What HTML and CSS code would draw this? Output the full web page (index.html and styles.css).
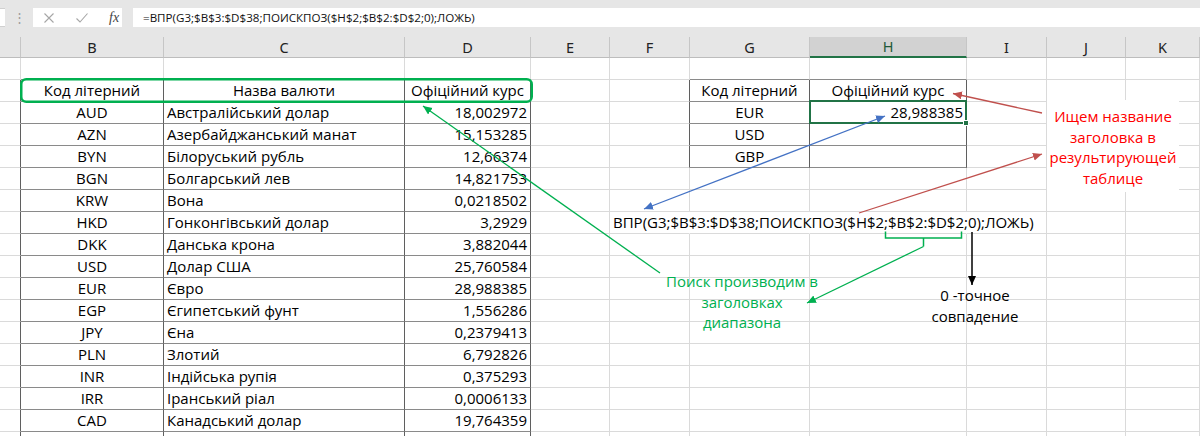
FILE: index.html
```html
<!DOCTYPE html>
<html lang="uk">
<head>
<meta charset="utf-8">
<title>ВПР + ПОИСКПОЗ</title>
<link rel="stylesheet" href="styles.css">
</head>
<body>
<div class="app">
  <div class="fbar">
    <div class="namebox"></div>
    <div class="grip">⋮</div>
    <div class="fxbox">
      <svg class="ic" width="10" height="10" viewBox="0 0 10 10"><path d="M0.5 0.5 L9.5 9.5 M9.5 0.5 L0.5 9.5" stroke="#a6a6a6" stroke-width="1.1" fill="none"/></svg>
      <svg class="ic" width="12" height="10" viewBox="0 0 12 10"><path d="M0.5 5.5 L4 9 L11.5 0.5" stroke="#a6a6a6" stroke-width="1.1" fill="none"/></svg>
      <span class="fx">fx</span>
    </div>
    <div class="finput">=ВПР(G3;$B$3:$D$38;ПОИСКПОЗ($H$2;$B$2:$D$2;0);ЛОЖЬ)</div>
  </div>

  <div class="row hdr">
    <div></div><div>B</div><div>C</div><div>D</div><div>E</div><div>F</div><div>G</div><div class="on">H</div><div>I</div><div>J</div><div>K</div>
  </div>

  <div class="sheet">
    <div class="row"><div></div><div class="tt"></div><div class="tt"></div><div class="tt"></div><div></div><div></div><div class="tt"></div><div class="tt"></div><div></div><div></div><div></div></div>
    <div class="row"><div class="tl"></div><div class="t ctr">Код літерний</div><div class="t ctr">Назва валюти</div><div class="t ctr">Офіційний курс</div><div></div><div class="tl"></div><div class="t ctr">Код літерний</div><div class="t ctr">Офіційний курс</div><div></div><div></div><div></div></div>
    <div class="row"><div class="tl"></div><div class="t ctr">AUD</div><div class="t">Австралійський долар</div><div class="t rt">18,002972</div><div></div><div class="tl"></div><div class="t ctr">EUR</div><div class="t rt sel">28,988385</div><div></div><div></div><div></div></div>
    <div class="row"><div class="tl"></div><div class="t ctr">AZN</div><div class="t">Азербайджанський манат</div><div class="t rt">15,153285</div><div></div><div class="tl"></div><div class="t ctr">USD</div><div class="t"></div><div></div><div></div><div></div></div>
    <div class="row"><div class="tl"></div><div class="t ctr">BYN</div><div class="t">Білоруський рубль</div><div class="t rt">12,66374</div><div></div><div class="tl"></div><div class="t ctr">GBP</div><div class="t"></div><div></div><div></div><div></div></div>
    <div class="row"><div class="tl"></div><div class="t ctr">BGN</div><div class="t">Болгарський лев</div><div class="t rt">14,821753</div><div></div><div></div><div></div><div></div><div></div><div></div><div></div></div>
    <div class="row"><div class="tl"></div><div class="t ctr">KRW</div><div class="t">Вона</div><div class="t rt">0,0218502</div><div></div><div></div><div></div><div></div><div></div><div></div><div></div></div>
    <div class="row"><div class="tl"></div><div class="t ctr">HKD</div><div class="t">Гонконгівський долар</div><div class="t rt">3,2929</div><div></div><div class="ov">ВПР(G3;$B$3:$D$38;ПОИСКПОЗ($H$2;$B$2:$D$2;0);ЛОЖЬ)</div><div class="nr"></div><div class="nr"></div><div></div><div></div><div></div></div>
    <div class="row"><div class="tl"></div><div class="t ctr">DKK</div><div class="t">Данська крона</div><div class="t rt">3,882044</div><div></div><div></div><div></div><div></div><div></div><div></div><div></div></div>
    <div class="row"><div class="tl"></div><div class="t ctr">USD</div><div class="t">Долар США</div><div class="t rt">25,760584</div><div></div><div></div><div></div><div></div><div></div><div></div><div></div></div>
    <div class="row"><div class="tl"></div><div class="t ctr">EUR</div><div class="t">Євро</div><div class="t rt">28,988385</div><div></div><div></div><div></div><div></div><div></div><div></div><div></div></div>
    <div class="row"><div class="tl"></div><div class="t ctr">EGP</div><div class="t">Єгипетський фунт</div><div class="t rt">1,556286</div><div></div><div></div><div></div><div></div><div></div><div></div><div></div></div>
    <div class="row"><div class="tl"></div><div class="t ctr">JPY</div><div class="t">Єна</div><div class="t rt">0,2379413</div><div></div><div></div><div></div><div></div><div></div><div></div><div></div></div>
    <div class="row"><div class="tl"></div><div class="t ctr">PLN</div><div class="t">Злотий</div><div class="t rt">6,792826</div><div></div><div></div><div></div><div></div><div></div><div></div><div></div></div>
    <div class="row"><div class="tl"></div><div class="t ctr">INR</div><div class="t">Індійська рупія</div><div class="t rt">0,375293</div><div></div><div></div><div></div><div></div><div></div><div></div><div></div></div>
    <div class="row"><div class="tl"></div><div class="t ctr">IRR</div><div class="t">Іранський ріал</div><div class="t rt">0,0006133</div><div></div><div></div><div></div><div></div><div></div><div></div><div></div></div>
    <div class="row"><div class="tl"></div><div class="t ctr">CAD</div><div class="t">Канадський долар</div><div class="t rt">19,764359</div><div></div><div></div><div></div><div></div><div></div><div></div><div></div></div>
    <div class="row"><div class="tl"></div><div class="t"></div><div class="t"></div><div class="t"></div><div></div><div></div><div></div><div></div><div></div><div></div><div></div></div>
  </div>

  <div class="note n-red">Ищем название<br>заголовка в<br>результирующей<br>таблице</div>
  <div class="note n-green">Поиск производим в<br>заголовках<br>диапазона</div>
  <div class="note n-black">0 -точное<br>совпадение</div>

  <svg class="ann" width="1200" height="436" viewBox="0 0 1200 436">
    <defs>
      <marker id="hg" markerUnits="userSpaceOnUse" markerWidth="10" markerHeight="10" refX="9" refY="4" orient="auto"><path d="M0 0 L9 4 L0 8 Z" fill="#00b050"/></marker>
      <marker id="hb" markerUnits="userSpaceOnUse" markerWidth="10" markerHeight="10" refX="9" refY="4" orient="auto-start-reverse"><path d="M0 0 L9 4 L0 8 Z" fill="#4472c4"/></marker>
      <marker id="hr" markerUnits="userSpaceOnUse" markerWidth="10" markerHeight="10" refX="9" refY="4" orient="auto"><path d="M0 0 L9 4 L0 8 Z" fill="#c0504d"/></marker>
      <marker id="hk" markerUnits="userSpaceOnUse" markerWidth="10" markerHeight="10" refX="9" refY="4" orient="auto"><path d="M0 0 L9 4 L0 8 Z" fill="#000"/></marker>
    </defs>
    <rect x="21.25" y="79.25" width="510.5" height="22.5" rx="5" fill="none" stroke="#00b050" stroke-width="2.5"/>
    <line x1="660" y1="273" x2="423" y2="106" stroke="#00b050" stroke-width="1.3" marker-end="url(#hg)"/>
    <line x1="644" y1="209" x2="885" y2="116" stroke="#4472c4" stroke-width="1.3" marker-start="url(#hb)" marker-end="url(#hb)"/>
    <line x1="1042" y1="113" x2="953" y2="93.5" stroke="#c0504d" stroke-width="1.3" marker-end="url(#hr)"/>
    <line x1="859" y1="213" x2="1042" y2="154" stroke="#c0504d" stroke-width="1.3" marker-end="url(#hr)"/>
    <path d="M885.5 231.5 V238 H961.5 V231.5 M923.5 238 V246.5" fill="none" stroke="#00b050" stroke-width="1.5"/>
    <line x1="923.5" y1="246.5" x2="807" y2="303" stroke="#00b050" stroke-width="1.3" marker-end="url(#hg)"/>
    <line x1="972" y1="232" x2="972" y2="285" stroke="#000" stroke-width="1.5" marker-end="url(#hk)"/>
  </svg>
</div>
</body>
</html>
```

FILE: styles.css
```css
html, body {
  margin: 0;
  padding: 0;
  background: #ffffff;
}
.app {
  position: relative;
  width: 1200px;
  height: 436px;
  overflow: hidden;
  font-family: "Open Sans", "Noto Sans", sans-serif;
}
.fbar {
  display: flex;
  align-items: flex-start;
  height: 37px;
  box-sizing: border-box;
  padding-top: 8px;
  background: #e6e6e6;
}
.namebox {
  width: 5px;
  height: 19px;
  background: #fff;
  border-top: 1px solid #d0d0d0;
  border-bottom: 1px solid #d0d0d0;
  box-sizing: border-box;
}
.grip {
  width: 28px;
  height: 19px;
  line-height: 19px;
  text-align: center;
  color: #9c9c9c;
  font-size: 13px;
}
.fxbox {
  width: 89px;
  height: 19px;
  background: #fff;
  display: flex;
  align-items: center;
  box-sizing: border-box;
  padding-left: 11px;
}
.fxbox .ic { display: block; }
.fxbox .ic + .ic { margin-left: 22px; }
.fx {
  margin-left: 21px;
  font: italic 14px/19px "Liberation Serif", serif;
  color: #444;
}
.finput {
  flex: 1;
  margin-left: 11px;
  height: 19px;
  background: #fff;
  padding-left: 10px;
  font: 11.6px/19px "Open Sans", sans-serif;
  color: #111;
  white-space: nowrap;
}

.row {
  display: grid;
  grid-template-columns: 21px 143px 241px 126px 79px 80px 120px 157px 80px 79px 1fr;
  height: 22px;
}
.row > div {
  box-sizing: border-box;
  border-right: 1px solid #dadada;
  border-bottom: 1px solid #dadada;
  padding: 0 3px;
  font: 15px/21px "Open Sans", sans-serif;
  color: #000;
  white-space: nowrap;
  overflow: hidden;
}
.hdr {
  height: 21px;
  background: #e6e6e6;
}
.hdr > div {
  border-right-color: #c6c6c6;
  border-bottom-color: #bdbdbd;
  text-align: center;
  font: 14.5px/20px "Noto Sans", sans-serif;
  color: #222;
}
.hdr > div.on {
  background: #d2d2d2;
  color: #1f5a3a;
  border-bottom: 2px solid #217346;
  line-height: 19px;
}

.row > .t {
  border-right-color: #5f5f5f;
  border-bottom-color: #8a8a8a;
}
.row > .tl { border-right-color: #5f5f5f; }
.row > .tt { border-bottom-color: #8a8a8a; }
.row > .nr { border-right-color: transparent; }
.row > .ov {
  overflow: visible;
  border-right-color: transparent;
}
.ctr { text-align: center; }
.rt { text-align: right; }
.row > .sel {
  position: relative;
  overflow: visible;
}
.sel::after {
  content: "";
  position: absolute;
  left: -1px;
  top: -2px;
  right: -1px;
  bottom: -1px;
  border: 2px solid #217346;
}
.sel::before {
  content: "";
  position: absolute;
  right: -3px;
  bottom: -3px;
  width: 4px;
  height: 4px;
  background: #217346;
  border: 1px solid #fff;
  z-index: 1;
}

.note {
  position: absolute;
  text-align: center;
  font: 15px/20.6px "Open Sans", sans-serif;
  white-space: nowrap;
}
.n-red {
  left: 1047px;
  top: 100px;
  width: 132px;
  height: 92px;
  padding-top: 6px;
  box-sizing: border-box;
  background: #fff;
  color: #ff0000;
}
.n-green {
  left: 662px;
  top: 271px;
  width: 160px;
  color: #00b050;
}
.n-black {
  left: 915px;
  top: 285px;
  width: 120px;
  color: #000;
}
.ann {
  position: absolute;
  left: 0;
  top: 0;
  pointer-events: none;
}
```
